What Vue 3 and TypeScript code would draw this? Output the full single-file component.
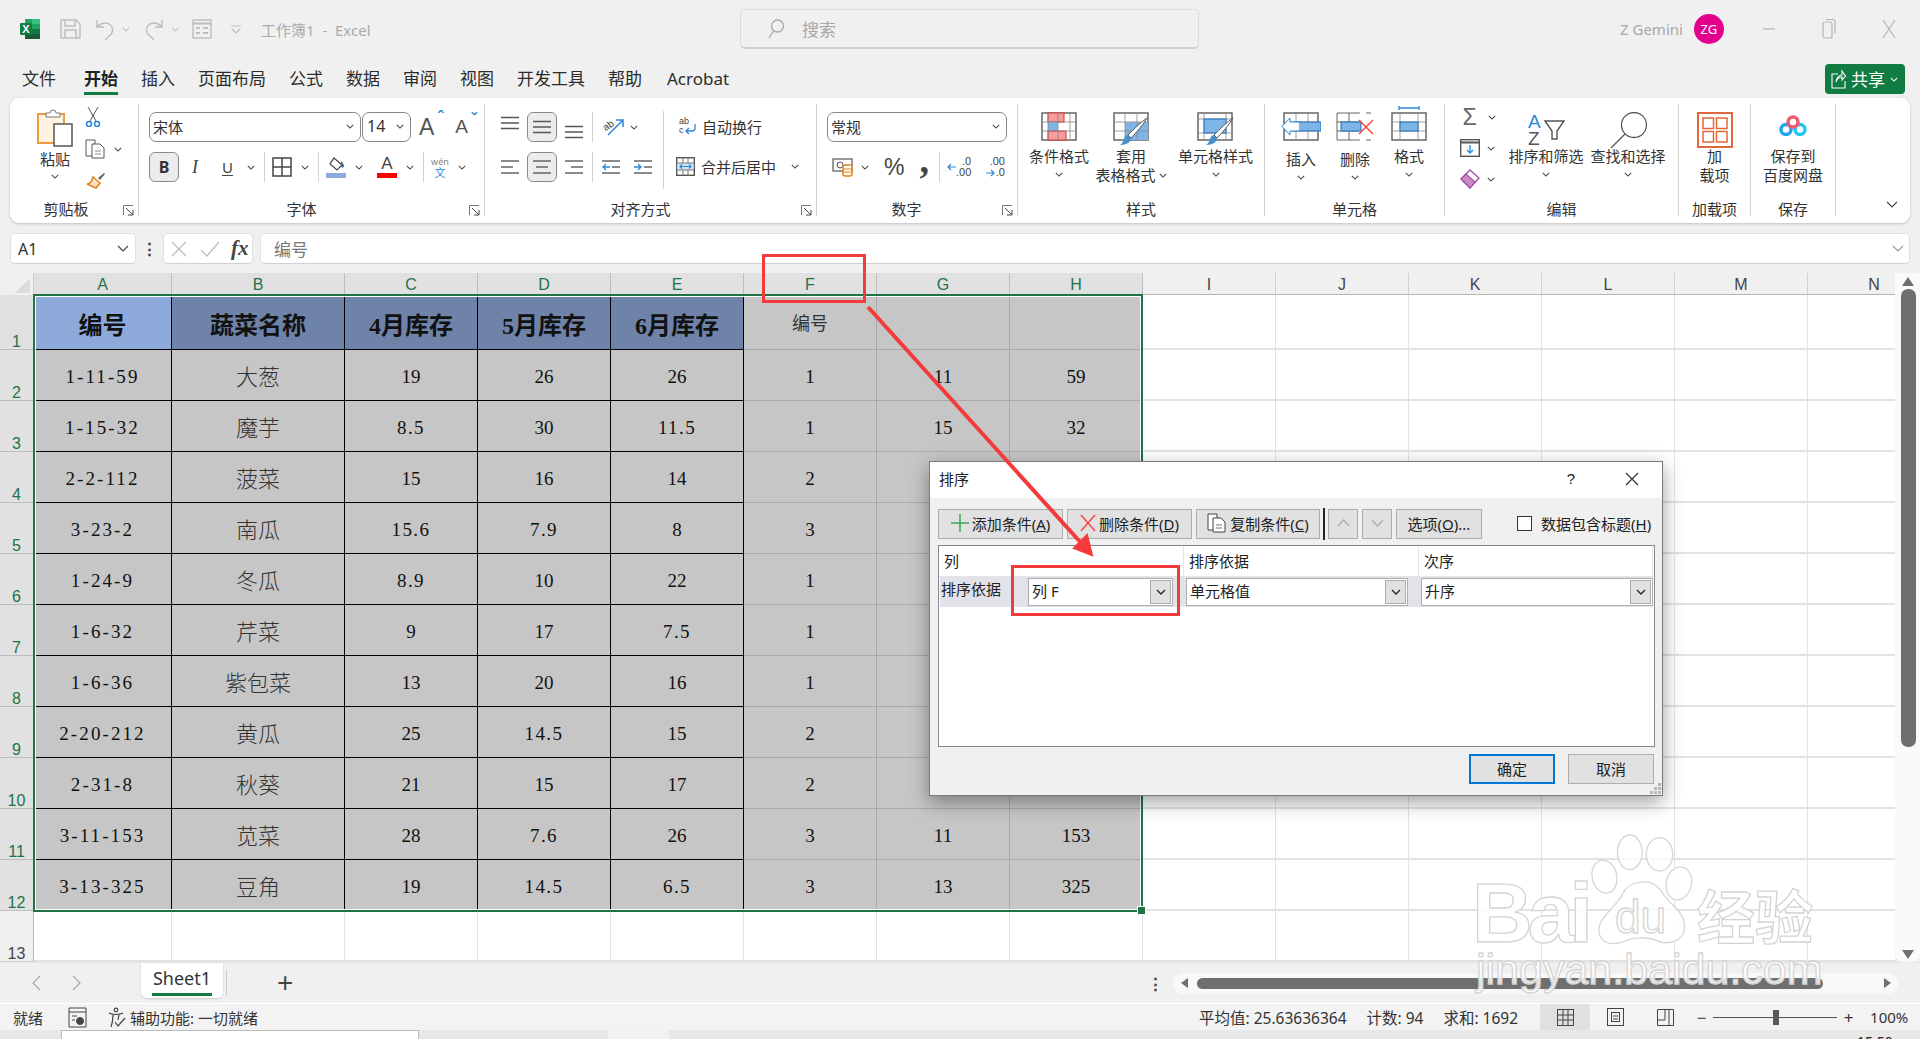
<template>
  <div class="app">
    <!-- shared icon symbols -->
    <svg class="defs" xmlns="http://www.w3.org/2000/svg">
      <symbol id="chev" viewBox="0 0 10 6"><path d="M1 1l4 4 4-4" fill="none" stroke="currentColor" stroke-width="1.3" /></symbol>
      <symbol id="launcher" viewBox="0 0 11 11">
        <path d="M.5 10V.5H10" fill="none" stroke="#777" />
        <path d="M3 3l6.5 6.5M5 10h5V5" fill="none" stroke="#444" />
      </symbol>
      <symbol id="lines" viewBox="0 0 18 14"><path d="M0 1.5h18M0 7h18M0 12.5h18" stroke="#555" stroke-width="1.3" /></symbol>
      <symbol id="brush" viewBox="0 0 30 30">
        <path d="M28 1C24 8 17 16 12 21l-3-3C15 12 22 5 28 1z" fill="#fff" stroke="#555" />
        <path d="M9 18l3 3c0 4-4 7-11 7 3-2 3-4 4-6 1-3 2-4 4-4z" fill="#4a90c8" />
      </symbol>
    </svg>

    <header class="titlebar">
      <svg class="logo" width="20" height="20" viewBox="0 0 20 20">
        <rect x="5" width="15" height="20" rx="1" fill="#21a366" />
        <rect x="12" width="8" height="5" fill="#33c481" />
        <rect x="12" y="10" width="8" height="5" fill="#107c41" />
        <rect x="5" y="15" width="15" height="5" fill="#185c37" />
        <rect y="4" width="12" height="12" rx="1" fill="#107c41" />
        <text x="6" y="14" font-size="11" font-weight="700" text-anchor="middle" fill="#fff" font-family="Liberation Sans">X</text>
      </svg>
      <svg class="qa-save" width="21" height="20" viewBox="0 0 21 20" fill="none" stroke="#bdbdbd" stroke-width="1.4">
        <path d="M1 1h15l4 4v14H1z" /><path d="M5 1v6h10V1M5 19v-8h11v8" />
      </svg>
      <svg class="qa-undo" width="20" height="21" viewBox="0 0 20 21" fill="none" stroke="#bdbdbd" stroke-width="1.4">
        <path d="M2 1v7h7M2 8c4-4 8-5 12-3 5 3 4 9 1 11l-5 5" />
      </svg>
      <svg class="qa-chev" width="8" height="5"><use href="#chev" /></svg>
      <svg class="qa-redo" width="20" height="21" viewBox="0 0 20 21" fill="none" stroke="#bdbdbd" stroke-width="1.4">
        <path d="M18 1v7h-7M18 8c-4-4-8-5-12-3-5 3-4 9-1 11l5 5" />
      </svg>
      <svg class="qa-chev" width="8" height="5"><use href="#chev" /></svg>
      <svg class="qa-form" width="20" height="20" viewBox="0 0 20 20" fill="none" stroke="#bdbdbd" stroke-width="1.4">
        <rect x="1" y="1" width="18" height="18" /><path d="M1 4.5h18" stroke-width="2" /><path d="M4 9h4M11 9h5M4 14h4M11 14h5" stroke-width="2" />
      </svg>
      <svg class="qa-custom" width="10" height="9" viewBox="0 0 10 9" fill="none" stroke="#bdbdbd" stroke-width="1.2"><path d="M0 1h10M1 4l4 4 4-4" /></svg>
      <span class="doc-title">工作簿1 &nbsp;-&nbsp; Excel</span>
      <div class="search">
        <svg width="16" height="20" viewBox="0 0 16 20" fill="none" stroke="#aaa" stroke-width="1.3"><circle cx="9.5" cy="7" r="6" /><path d="M5.500 12L1 19" /></svg>
        <span>搜索</span>
      </div>
      <span class="user-name">Z Gemini</span>
      <span class="avatar">ZG</span>
      <div class="win-btns">
        <svg width="14" height="14" viewBox="0 0 14 14"><path d="M1 7h12" stroke="#b5b5b5" stroke-width="1.200" /></svg>
        <svg width="14" height="22" viewBox="0 0 14 22" fill="none" stroke="#b5b5b5" stroke-width="1.200"><rect x="1" y="4" width="9" height="16" rx="2" /><path d="M4 1.500h7a2 2 0 0 1 2 2v12" /></svg>
        <svg width="14" height="22" viewBox="0 0 14 22" fill="none" stroke="#b5b5b5" stroke-width="1.200"><path d="M1 2l12 18M13 2L1 20" /></svg>
      </div>
    </header>

    <nav class="tabs">
      <span v-for="t in tabs" :key="t" class="tab" :class="{ active: t === '开始' }">{{ t }}</span>
      <button class="share">
        <svg width="15" height="20" viewBox="0 0 15 20" fill="none" stroke="#fff" stroke-width="1.100"><path d="M7 5H1v14h13v-7M5 13c0-4 3-7 6-7V2l3.500 5L11 11V8c-3 0-5 2-6 5z" /></svg>
        <span>共享</span>
        <svg class="chev" width="8" height="5"><use href="#chev" /></svg>
      </button>
    </nav>

    <section class="ribbon">
      <!-- 剪贴板 -->
      <div class="group" style="width: 129px">
        <div class="gbody clip-body">
          <div class="paste">
            <svg width="36" height="39" viewBox="0 0 36 39">
              <rect x="1" y="6" width="26" height="29" fill="#fff3e0" stroke="#ee9c3f" stroke-width="2" />
              <path d="M9 9V5h4a3 3 0 0 1 6 0h4v4z" fill="#fff" stroke="#777" />
              <rect x="17" y="16" width="18" height="22" fill="#fff" stroke="#555" stroke-width="1.500" />
            </svg>
            <span class="lbl">粘贴</span>
            <svg class="chev" width="8" height="5"><use href="#chev" /></svg>
          </div>
          <div class="clip-tools">
            <svg width="16" height="20" viewBox="0 0 16 20" fill="none">
              <path d="M3 0l8 14M13 0L5 14" stroke="#555" />
              <circle cx="4" cy="17" r="2.500" stroke="#2b88d8" stroke-width="1.500" /><circle cx="12" cy="17" r="2.500" stroke="#2b88d8" stroke-width="1.500" />
            </svg>
            <div class="copy-row">
              <svg width="20" height="20" viewBox="0 0 20 20" fill="#fff" stroke="#555">
                <path d="M1 1h9v16H1z" /><path d="M7 5h8l4 4v10H7z" /><path d="M10 12h6M10 15h6" stroke="#888" />
              </svg>
              <svg class="chev" width="8" height="5"><use href="#chev" /></svg>
            </div>
            <svg width="20" height="20" viewBox="0 0 20 20" fill="none">
              <path d="M19 2l-6 5 2 2 5-6z" fill="#666" />
              <path d="M8 6l7 6-4 5-9-4c3 0 5-3 6-7z" fill="#fbe3c5" stroke="#e8801a" stroke-width="1.500" />
            </svg>
          </div>
        </div>
        <div class="group-label" style="padding-right: 16px">剪贴板</div>
        <svg class="launch" width="11" height="11"><use href="#launcher" /></svg>
      </div>

      <!-- 字体 -->
      <div class="group" style="width: 346px">
        <div class="gbody font-body">
          <div class="tool-row">
            <div class="select" style="width: 212px"><span>宋体</span><svg class="chev" width="8" height="5"><use href="#chev" /></svg></div>
            <div class="select" style="width: 49px; margin-left: 1px"><span class="latin">14</span><svg class="chev" width="8" height="5"><use href="#chev" /></svg></div>
            <span class="grow-a big-a">A<i>ˆ</i></span>
            <span class="grow-a small-a">A<i>ˇ</i></span>
          </div>
          <div class="tool-row row2">
            <span class="toggled bold">B</span>
            <span class="italic">I</span>
            <span class="under">U</span>
            <svg class="chev" width="8" height="5"><use href="#chev" /></svg>
            <i class="vsep"></i>
            <svg width="20" height="20" viewBox="0 0 20 20" fill="none" stroke="#444" stroke-width="1.500"><rect x="1" y="1" width="18" height="18" /><path d="M10 1v18M1 10h18" /></svg>
            <svg class="chev" width="8" height="5"><use href="#chev" /></svg>
            <i class="vsep"></i>
            <div class="color-btn">
              <svg width="20" height="15" viewBox="0 0 20 15" fill="none"><path d="M8 1l8 7-5 5-7-6z" stroke="#444" stroke-width="1.200" /><path d="M15 4c2 2 3 4 3 5a1.500 1.500 0 0 1-3 0z" fill="#2b6cb0" /></svg>
              <i style="background: #8eaadb"></i>
            </div>
            <svg class="chev" width="8" height="5"><use href="#chev" /></svg>
            <div class="color-btn a-btn">
              <span>A</span>
              <i style="background: #f00"></i>
            </div>
            <svg class="chev" width="8" height="5"><use href="#chev" /></svg>
            <i class="vsep"></i>
            <div class="wen"><span>wén</span><b>文</b></div>
            <svg class="chev" width="8" height="5"><use href="#chev" /></svg>
          </div>
        </div>
        <div class="group-label" style="padding-right: 20px">字体</div>
        <svg class="launch" width="11" height="11"><use href="#launcher" /></svg>
      </div>

      <!-- 对齐方式 -->
      <div class="group" style="width: 332px">
        <div class="gbody align-body">
          <div class="align-left">
            <div class="tool-row">
              <svg class="al" width="18" height="14" style="margin-top: -9px"><use href="#lines" /></svg>
              <span class="toggled"><svg width="18" height="14"><use href="#lines" /></svg></span>
              <svg class="al" width="18" height="14" style="margin-top: 10px"><use href="#lines" /></svg>
              <i class="vsep"></i>
              <svg class="orient" width="22" height="20" viewBox="0 0 22 20" fill="none">
                <text x="1" y="12" font-size="10" fill="#444" font-family="Liberation Sans" transform="rotate(-35 6 9)">ab</text>
                <path d="M6 18L20 4M14 3h7v7" stroke="#2b88d8" stroke-width="1.500" />
              </svg>
              <svg class="chev" width="8" height="5"><use href="#chev" /></svg>
            </div>
            <div class="tool-row row2">
              <svg class="al" width="18" height="16" viewBox="0 0 18 16"><path d="M0 2h18M0 8h12M0 14h18" stroke="#666" stroke-width="1.500" /></svg>
              <span class="toggled"><svg width="18" height="16" viewBox="0 0 18 16"><path d="M0 2h18M3 8h12M0 14h18" stroke="#666" stroke-width="1.500" /></svg></span>
              <svg class="al" width="18" height="16" viewBox="0 0 18 16"><path d="M0 2h18M6 8h12M0 14h18" stroke="#666" stroke-width="1.500" /></svg>
              <i class="vsep"></i>
              <svg width="18" height="16" viewBox="0 0 18 16" fill="none"><path d="M0 2h18M10 8h8M0 14h18" stroke="#666" stroke-width="1.300" /><path d="M8 8H1M4 5L1 8l3 3" stroke="#2b88d8" stroke-width="1.300" /></svg>
              <svg width="18" height="16" viewBox="0 0 18 16" fill="none"><path d="M0 2h18M10 8h8M0 14h18" stroke="#666" stroke-width="1.300" /><path d="M0 8h7M4 5l3 3-3 3" stroke="#2b88d8" stroke-width="1.300" /></svg>
            </div>
          </div>
          <div class="merge-col">
            <div class="text-tool wrap-tool">
              <svg width="18" height="20" viewBox="0 0 18 20" fill="none">
                <text x="0" y="8" font-size="9" fill="#444" font-family="Liberation Sans">ab</text>
                <text x="0" y="17" font-size="9" fill="#444" font-family="Liberation Sans">c</text>
                <path d="M16 8v4c0 2-1 3-3 3H7M10 12l-3 3 3 3" stroke="#2b88d8" stroke-width="1.300" />
              </svg>
              <span>自动换行</span>
            </div>
            <div class="text-tool merge-tool">
              <svg width="19" height="19" viewBox="0 0 19 19" fill="none">
                <rect x=".7" y=".7" width="17.600" height="17.600" stroke="#555" stroke-width="1.400" />
                <rect x="1.400" y="6" width="16" height="7" fill="#cfe4f7" />
                <path d="M1 6h17M1 13h17M7 1v5M12 1v5M7 13v5M12 13v5" stroke="#777" />
                <path d="M4 9.500h11M6 7.500l-2 2 2 2M13 7.500l2 2-2 2" stroke="#2b88d8" stroke-width="1.200" />
              </svg>
              <span>合并后居中</span>
              <svg class="chev" width="8" height="5" style="margin-left: 9px"><use href="#chev" /></svg>
            </div>
          </div>
        </div>
        <div class="group-label" style="padding-right: 20px">对齐方式</div>
        <svg class="launch" width="11" height="11"><use href="#launcher" /></svg>
      </div>

      <!-- 数字 -->
      <div class="group" style="width: 201px">
        <div class="gbody num-body">
          <div class="select" style="width: 180px"><span>常规</span><svg class="chev" width="8" height="5"><use href="#chev" /></svg></div>
          <div class="tool-row row2 num-row">
            <svg width="21" height="20" viewBox="0 0 21 20" fill="none">
              <rect x="1" y="2" width="19" height="12" stroke="#555" stroke-width="1.200" />
              <circle cx="8" cy="8" r="3" stroke="#555" />
              <rect x="11" y="8" width="9" height="11" rx="2" fill="#fff" stroke="#e8801a" stroke-width="1.500" />
              <path d="M11 12h9M11 15h9" stroke="#e8801a" />
            </svg>
            <svg class="chev" width="8" height="5"><use href="#chev" /></svg>
            <span class="pct">%</span>
            <span class="comma">,</span>
            <i class="vsep"></i>
            <div class="dec"><svg width="9" height="8" viewBox="0 0 9 8" fill="none"><path d="M9 4H1M4 1L1 4l3 3" stroke="#2b88d8" stroke-width="1.200" /></svg><span>.0<br />.00</span></div>
            <div class="dec"><span>.00</span><span class="dec-b"><svg width="9" height="8" viewBox="0 0 9 8" fill="none"><path d="M0 4h8M5 1l3 3-3 3" stroke="#2b88d8" stroke-width="1.200" /></svg>.0</span></div>
          </div>
        </div>
        <div class="group-label" style="padding-right: 21px">数字</div>
        <svg class="launch" width="11" height="11"><use href="#launcher" /></svg>
      </div>

      <!-- 样式 -->
      <div class="group" style="width: 247px">
        <div class="gbody big-row" style="padding-left: 11px">
          <div class="big" style="width: 60px">
            <div class="big-icon">
              <svg width="36" height="29" viewBox="0 0 36 29">
                <rect x="1" y="1" width="34" height="27" fill="#fff" stroke="#666" stroke-width="1.500" />
                <rect x="7" y="1" width="16" height="9" fill="#f79c9c" stroke="#d33" />
                <rect x="7" y="10" width="10" height="9" fill="#7fb5e6" />
                <rect x="7" y="19" width="18" height="9" fill="#f79c9c" stroke="#d33" />
                <path d="M7 1v27M17 1v27M29 1v27M1 10h34M1 19h34" stroke="#888" fill="none" stroke-width=".8" />
              </svg>
            </div>
            <span class="lbl">条件格式</span>
            <svg class="chev" width="8" height="5"><use href="#chev" /></svg>
          </div>
          <div class="big" style="width: 68px; margin-left: 8px">
            <div class="big-icon styled-icon">
              <svg width="36" height="36" viewBox="0 0 36 36">
                <rect x="1" y="1" width="34" height="27" fill="#fff" stroke="#666" stroke-width="1.500" />
                <rect x="12" y="10" width="23" height="18" fill="#7fb5e6" />
                <path d="M12 1v27M24 1v27M1 10h34M1 19h34" stroke="#888" fill="none" stroke-width=".8" />
                <svg x="6" y="5" width="30" height="30"><use href="#brush" /></svg>
              </svg>
            </div>
            <span class="lbl">套用</span>
            <span class="lbl table-fmt">表格格式<svg class="chev" width="8" height="5"><use href="#chev" /></svg></span>
          </div>
          <div class="big" style="width: 75px; margin-left: 13px">
            <div class="big-icon styled-icon">
              <svg width="38" height="36" viewBox="0 0 38 36">
                <rect x="1" y="1" width="34" height="27" fill="#fff" stroke="#666" stroke-width="1.500" />
                <path d="M7 1v27M29 1v27M1 7h34M1 21h34" stroke="#888" fill="none" stroke-width=".8" />
                <rect x="7" y="7" width="22" height="14" fill="#7fb5e6" stroke="#1f6fb5" />
                <svg x="8" y="5" width="30" height="30"><use href="#brush" /></svg>
              </svg>
            </div>
            <span class="lbl">单元格样式</span>
            <svg class="chev" width="8" height="5"><use href="#chev" /></svg>
          </div>
        </div>
        <div class="group-label">样式</div>
      </div>

      <!-- 单元格 -->
      <div class="group" style="width: 180px">
        <div class="gbody big-row" style="padding-left: 16px">
          <div class="big" style="width: 40px">
            <div class="big-icon">
              <svg width="40" height="29" viewBox="0 0 40 29">
                <rect x="3" y="1" width="34" height="27" fill="#fff" stroke="#666" stroke-width="1.500" />
                <path d="M15 1v27M27 1v27M3 10h34M3 19h34" stroke="#888" fill="none" stroke-width=".8" />
                <rect x="14" y="10" width="26" height="9" fill="#7fb5e6" stroke="#1f6fb5" />
                <path d="M18 11v-1h-9V6L1 14.500 9 23v-4h9" fill="#fff" stroke="#2b88d8" />
              </svg>
            </div>
            <span class="lbl low">插入</span>
            <svg class="chev low" width="8" height="5"><use href="#chev" /></svg>
          </div>
          <div class="big" style="width: 38px; margin-left: 15px">
            <div class="big-icon">
              <svg width="38" height="29" viewBox="0 0 38 29">
                <path d="M24 1H1v27h23M13 1v27M1 10h22M1 19h22" stroke="#666" fill="none" />
                <path d="M30 1h5M30 28h5" stroke="#666" />
                <rect x="5" y="10" width="20" height="9" fill="#7fb5e6" stroke="#1f6fb5" />
                <path d="M23 8l14 14M37 8L23 22" stroke="#f44" stroke-width="1.500" />
              </svg>
            </div>
            <span class="lbl low">删除</span>
            <svg class="chev low" width="8" height="5"><use href="#chev" /></svg>
          </div>
          <div class="big fmt-big" style="width: 36px; margin-left: 17px">
            <div class="big-icon">
              <svg width="36" height="35" viewBox="0 0 36 35">
                <path d="M8 2h20M8 0v4M28 0v4" stroke="#2b88d8" stroke-width="1.300" />
                <rect x="1" y="7" width="34" height="27" fill="#fff" stroke="#666" stroke-width="1.500" />
                <path d="M9 7v27M27 7v27M1 16h34M1 25h34" stroke="#888" fill="none" stroke-width=".8" />
                <rect x="9" y="16" width="18" height="9" fill="#7fb5e6" stroke="#1f6fb5" />
              </svg>
            </div>
            <span class="lbl">格式</span>
            <svg class="chev" width="8" height="5"><use href="#chev" /></svg>
          </div>
        </div>
        <div class="group-label">单元格</div>
      </div>

      <!-- 编辑 -->
      <div class="group" style="width: 234px">
        <div class="gbody big-row edit-body">
          <div class="edit-tools">
            <div class="edit-line">
              <span class="sigma">Σ</span>
              <svg class="chev" width="8" height="5" style="margin-left: 9px"><use href="#chev" /></svg>
            </div>
            <div class="edit-line">
              <svg width="20" height="18" viewBox="0 0 20 18" fill="none">
                <rect x=".7" y=".7" width="18.600" height="16.600" stroke="#555" stroke-width="1.400" /><path d="M1 3.500h18" stroke="#555" stroke-width="2" />
                <path d="M10 6v8M7 11l3 3 3-3" stroke="#2b88d8" stroke-width="1.300" />
              </svg>
              <svg class="chev" width="8" height="5" style="margin-left: 7px"><use href="#chev" /></svg>
            </div>
            <div class="edit-line">
              <svg width="20" height="20" viewBox="0 0 20 20" fill="none">
                <path d="M10 1l9 8-9 10-9-9z" fill="#fff" stroke="#a349a4" stroke-width="1.300" />
                <path d="M1 10l5-5 9 8-5 6z" fill="#c78ac8" stroke="#a349a4" stroke-width="1.100" />
              </svg>
              <svg class="chev" width="8" height="5" style="margin-left: 7px"><use href="#chev" /></svg>
            </div>
          </div>
          <div class="big" style="width: 76px; margin-left: 12px">
            <div class="big-icon">
              <svg width="37" height="35" viewBox="0 0 37 35" fill="none">
                <text x="0" y="16" font-size="19" fill="#2b88d8" font-family="Liberation Sans">A</text>
                <text x="0" y="33" font-size="19" fill="#555" font-family="Liberation Sans">Z</text>
                <path d="M17 9h19l-7 10v8h-5v-8z" stroke="#555" stroke-width="1.400" />
              </svg>
            </div>
            <span class="lbl">排序和筛选</span>
            <svg class="chev" width="8" height="5"><use href="#chev" /></svg>
          </div>
          <div class="big" style="width: 76px; margin-left: 6px">
            <div class="big-icon">
              <svg width="37" height="37" viewBox="0 0 37 37" fill="none" stroke="#555" stroke-width="1.300"><circle cx="24" cy="13" r="12.500" /><path d="M15 22L1 36" /></svg>
            </div>
            <span class="lbl">查找和选择</span>
            <svg class="chev" width="8" height="5"><use href="#chev" /></svg>
          </div>
        </div>
        <div class="group-label">编辑</div>
      </div>

      <!-- 加载项 -->
      <div class="group" style="width: 72px">
        <div class="gbody big-row" style="justify-content: center">
          <div class="big">
            <div class="big-icon">
              <svg width="36" height="36" viewBox="0 0 36 36" fill="none" stroke="#e0683a" stroke-width="1.500">
                <rect x="1" y="1" width="34" height="34" stroke-width="2" />
                <rect x="6" y="6" width="10.500" height="10.500" /><rect x="19.500" y="6" width="10.500" height="10.500" />
                <rect x="6" y="19.500" width="10.500" height="10.500" /><rect x="19.500" y="19.500" width="10.500" height="10.500" />
              </svg>
            </div>
            <span class="lbl">加</span>
            <span class="lbl table-fmt">载项</span>
          </div>
        </div>
        <div class="group-label">加载项</div>
      </div>

      <!-- 保存 -->
      <div class="group" style="width: 85px">
        <div class="gbody big-row" style="justify-content: center">
          <div class="big">
            <div class="big-icon baidu-icon">
              <svg width="28" height="22" viewBox="0 0 28 22" fill="none" stroke-width="3.500">
                <circle cx="7" cy="14.500" r="5" stroke="#22a5ee" />
                <circle cx="21" cy="14.500" r="5" stroke="#22c5ee" />
                <circle cx="14" cy="7" r="5" stroke="#ef5a6f" />
              </svg>
            </div>
            <span class="lbl">保存到</span>
            <span class="lbl table-fmt">百度网盘</span>
          </div>
        </div>
        <div class="group-label">保存</div>
      </div>

      <div class="collapse">
        <svg width="12" height="7" viewBox="0 0 12 7"><path d="M1 1l5 5 5-5" fill="none" stroke="#444" stroke-width="1.200" /></svg>
      </div>
    </section>

    <section class="formula">
      <div class="name-box"><span>A1</span><svg width="12" height="7" viewBox="0 0 12 7"><path d="M1 1l5 5 5-5" fill="none" stroke="#444" stroke-width="1.200" /></svg></div>
      <span class="dots">⋮</span>
      <div class="fx-box">
        <svg width="16" height="16" viewBox="0 0 16 16"><path d="M1 1l14 14M15 1L1 15" stroke="#bbb" stroke-width="1.200" /></svg>
        <svg width="20" height="16" viewBox="0 0 20 16"><path d="M1 9l6 6L19 1" fill="none" stroke="#bbb" stroke-width="1.200" /></svg>
        <span class="fx">fx</span>
      </div>
      <div class="formula-input">
        <span>编号</span>
        <svg width="12" height="7" viewBox="0 0 12 7"><path d="M1 1l5 5 5-5" fill="none" stroke="#999" stroke-width="1.200" /></svg>
      </div>
    </section>

    <section class="sheet-wrap">
      <div class="sheet">
        <div class="corner"><i></i></div>
        <div v-for="(c, i) in cols" :key="c" class="col-head" :class="{ sel: i < 8 }">{{ c }}</div>
        <template v-for="row in sheetRows" :key="row.n">
          <div class="row-head" :class="{ sel: row.n <= 12 }">{{ row.n }}</div>
          <div v-for="(cell, i) in row.cells" :key="i" class="cell" :class="cell.cls">{{ cell.text }}</div>
        </template>
        <div class="sel-box"><i></i></div>
      </div>
      <div class="vscroll">
        <i class="tri up"></i>
        <div class="vthumb"></div>
        <i class="tri down"></i>
      </div>
    </section>

    <section class="sheet-tabs">
      <svg class="nav-a" width="9" height="16" viewBox="0 0 9 16"><path d="M8 1L1 8l7 7" fill="none" stroke="#aaa" stroke-width="1.200" /></svg>
      <svg class="nav-b" width="9" height="16" viewBox="0 0 9 16"><path d="M1 1l7 7-7 7" fill="none" stroke="#aaa" stroke-width="1.200" /></svg>
      <div class="sheet-tab"><span>Sheet1</span></div>
      <i class="tab-sep"></i>
      <span class="add-sheet">+</span>
      <span class="h-dots">⋮</span>
      <div class="hscroll">
        <i class="tri left"></i>
        <div class="hthumb"></div>
        <i class="tri right"></i>
      </div>
    </section>

    <footer class="status">
      <span class="st-ready">就绪</span>
      <svg class="st-macro" width="19" height="21" viewBox="0 0 19 21" fill="none" stroke="#444">
        <path d="M1 1h17v19H1zM1 5h17M4 9h5M4 13h3" /><circle cx="12" cy="14" r="3.500" fill="#444" />
      </svg>
      <svg class="st-access" width="18" height="21" viewBox="0 0 18 21" fill="none" stroke="#444" stroke-width="1.200">
        <circle cx="8" cy="3" r="1.800" /><path d="M1 6c3 2 10 2 14 0M5 8c0 4 0 6-2 12M11 8l-1 5M7 15l3 4 7-8" />
      </svg>
      <span class="st-access-text">辅助功能: 一切就绪</span>
      <span class="st-stat" style="margin-left: 941px">平均值: 25.63636364</span>
      <span class="st-stat" style="margin-left: 20px">计数: 94</span>
      <span class="st-stat" style="margin-left: 20px">求和: 1692</span>
      <div class="view-btn on">
        <svg width="17" height="17" viewBox="0 0 17 17" fill="none" stroke="#444"><rect x=".5" y=".5" width="16" height="16" /><path d="M6 1v15M11 1v15M1 6h15M1 11h15" /></svg>
      </div>
      <div class="view-btn">
        <svg width="17" height="18" viewBox="0 0 17 18" fill="none" stroke="#444"><rect x=".5" y=".5" width="16" height="17" /><rect x="4.500" y="4.500" width="8" height="9" /><path d="M6 8h5M6 11h5" /></svg>
      </div>
      <div class="view-btn">
        <svg width="17" height="17" viewBox="0 0 17 17" fill="none" stroke="#444"><path d="M.5.500v16h16V.5zM8 1v10H1M12 1v15" /></svg>
      </div>
      <span class="zoom-sign">−</span>
      <div class="zoom-track"><i></i></div>
      <span class="zoom-sign">+</span>
      <span class="zoom-pct">100%</span>
    </footer>

    <div class="taskbar">
      <div class="task-win"></div>
      <div class="task-light"></div>
      <span class="clock">15:50</span>
    </div>

    <!-- 排序对话框 -->
    <div class="dialog">
      <div class="dlg-title">
        <span>排序</span>
        <span class="dlg-help">?</span>
        <svg width="14" height="14" viewBox="0 0 14 14"><path d="M1 1l12 12M13 1L1 13" stroke="#333" stroke-width="1.200" /></svg>
      </div>
      <div class="dlg-body">
        <div class="dlg-toolbar">
          <button class="btn" style="width: 125px">
            <svg width="18" height="18" viewBox="0 0 18 18"><path d="M9 0v18M0 9h18" stroke="#3aa655" stroke-width="1.500" /></svg>
            <span>添加条件(<u>A</u>)</span>
          </button>
          <button class="btn" style="width: 125px">
            <svg width="16" height="18" viewBox="0 0 16 18"><path d="M1 1l14 16M15 1L1 17" stroke="#f44" stroke-width="1.500" /></svg>
            <span>删除条件(<u>D</u>)</span>
          </button>
          <button class="btn" style="width: 124px">
            <svg width="20" height="20" viewBox="0 0 20 20" fill="#fff" stroke="#444"><path d="M1 1h9v16H1z" /><path d="M6 5h8l4 4v10H6z" /><path d="M9 12h6M9 15h6" stroke="#777" /></svg>
            <span>复制条件(<u>C</u>)</span>
          </button>
          <i class="dlg-sep"></i>
          <button class="btn arrow-btn"><svg width="13" height="8" viewBox="0 0 13 8"><path d="M1 7l5.500-6L12 7" fill="none" stroke="#aaa" stroke-width="1.200" /></svg></button>
          <button class="btn arrow-btn"><svg width="13" height="8" viewBox="0 0 13 8"><path d="M1 1l5.500 6L12 1" fill="none" stroke="#aaa" stroke-width="1.200" /></svg></button>
          <button class="btn" style="width: 86px"><span>选项(<u>O</u>)...</span></button>
          <label class="has-header"><i></i><span>数据包含标题(<u>H</u>)</span></label>
        </div>
        <div class="dlg-list">
          <div class="list-head">
            <span style="width: 245px">列</span>
            <span style="width: 235px">排序依据</span>
            <span style="width: 234px">次序</span>
          </div>
          <div class="list-row">
            <span class="row-name">排序依据</span>
            <div class="combo" style="width: 145px"><span>列 F</span><b><svg width="10" height="6"><use href="#chev" /></svg></b></div>
            <div class="combo" style="width: 222px; margin-left: 13px"><span>单元格值</span><b><svg width="10" height="6"><use href="#chev" /></svg></b></div>
            <div class="combo" style="width: 232px; margin-left: 13px"><span>升序</span><b><svg width="10" height="6"><use href="#chev" /></svg></b></div>
          </div>
        </div>
        <div class="dlg-foot">
          <button class="btn foot-btn primary">确定</button>
          <button class="btn foot-btn">取消</button>
        </div>
      </div>
      <div class="grip"><i v-for="n in 6" :key="n"></i></div>
    </div>

    <!-- 标注 -->
    <div class="mark mark-f"></div>
    <div class="mark mark-combo"></div>
    <svg class="arrow" width="1920" height="1039" viewBox="0 0 1920 1039">
      <path d="M868 307L1082 544" stroke="#f33b3b" stroke-width="4" fill="none" />
      <path d="M1092 555L1074 548 1087 535z" fill="#f33b3b" stroke="#f33b3b" stroke-width="2" />
    </svg>

    <!-- 水印 -->
    <div class="watermark">
      <span class="wm-bai">Bai</span>
      <svg class="wm-paw" width="107" height="120" viewBox="380 30 320 360" fill="rgba(255,255,255,.8)" stroke="#d6d6d6" stroke-width="4">
        <ellipse cx="432" cy="170" rx="37" ry="50" transform="rotate(-12 432 170)" />
        <ellipse cx="508" cy="97" rx="37" ry="52" />
        <ellipse cx="597" cy="103" rx="40" ry="50" />
        <ellipse cx="655" cy="190" rx="38" ry="50" transform="rotate(12 655 190)" />
        <path d="M415 330C415 290 470 260 490 215 505 185 570 170 600 210 620 250 672 270 672 320 672 370 610 375 590 362 560 350 520 350 490 365 450 380 415 365 415 330Z" />
      </svg>
      <span class="wm-du">du</span>
      <span class="wm-jy">经验</span>
      <span class="wm-url">jingyan.baidu.com</span>
    </div>
  </div>
</template>

<script setup lang="ts">
import { computed } from 'vue'

interface Veg {
  id: string
  name: string
  apr: string
  may: string
  jun: string
}

interface Cell {
  text: string
  cls: string
}

const tabs = ['文件', '开始', '插入', '页面布局', '公式', '数据', '审阅', '视图', '开发工具', '帮助', 'Acrobat']
const cols = ['A', 'B', 'C', 'D', 'E', 'F', 'G', 'H', 'I', 'J', 'K', 'L', 'M', 'N']

const data: Veg[] = [
  { id: '1-11-59', name: '大葱', apr: '19', may: '26', jun: '26' },
  { id: '1-15-32', name: '魔芋', apr: '8.5', may: '30', jun: '11.5' },
  { id: '2-2-112', name: '菠菜', apr: '15', may: '16', jun: '14' },
  { id: '3-23-2', name: '南瓜', apr: '15.6', may: '7.9', jun: '8' },
  { id: '1-24-9', name: '冬瓜', apr: '8.9', may: '10', jun: '22' },
  { id: '1-6-32', name: '芹菜', apr: '9', may: '17', jun: '7.5' },
  { id: '1-6-36', name: '紫包菜', apr: '13', may: '20', jun: '16' },
  { id: '2-20-212', name: '黄瓜', apr: '25', may: '14.5', jun: '15' },
  { id: '2-31-8', name: '秋葵', apr: '21', may: '15', jun: '17' },
  { id: '3-11-153', name: '苋菜', apr: '28', may: '7.6', jun: '26' },
  { id: '3-13-325', name: '豆角', apr: '19', may: '14.5', jun: '6.5' }
]

const num = (text: string, cls: string): Cell => ({
  text,
  cls: `${cls} num${text.includes('-') ? ' wider' : text.includes('.') ? ' wide' : ''}`
})

// 空白列 I 到 N
const blanks = (): Cell[] => Array.from({ length: 6 }, () => ({ text: '', cls: 'blank' }))

const sheetRows = computed(() => {
  const head: Cell[] = [
    { text: '编号', cls: 'active head' },
    { text: '蔬菜名称', cls: 'dim head' },
    { text: '4月库存', cls: 'dim head' },
    { text: '5月库存', cls: 'dim head' },
    { text: '6月库存', cls: 'dim head' },
    { text: '编号', cls: 'split small' },
    { text: '', cls: 'split' },
    { text: '', cls: 'split' },
    ...blanks()
  ]
  const rows = data.map((v, i) => {
    const [a, b, c] = v.id.split('-')
    // 第 4 到 10 行的 G、H 列被对话框挡住
    const covered = i >= 2 && i <= 8
    return {
      n: i + 2,
      cells: [
        num(v.id, 'data'),
        { text: v.name, cls: 'data cjk' },
        num(v.apr, 'data'),
        num(v.may, 'data'),
        num(v.jun, 'data'),
        num(a, 'split'),
        num(covered ? '' : b, 'split'),
        num(covered ? '' : c, 'split'),
        ...blanks()
      ]
    }
  })
  const empty: Cell[] = cols.map(() => ({ text: '', cls: 'blank' }))
  return [{ n: 1, cells: head }, ...rows, { n: 13, cells: empty }]
})
</script>

<style>
html,
body {
  margin: 0;
  background: #f0f0f0;
  overflow: hidden;
}
</style>

<style scoped>
.app {
  position: relative;
  display: flex;
  flex-direction: column;
  width: 1920px;
  height: 1039px;
  overflow: hidden;
  background: #f0f0f0;
  color: #333;
  font-family: "Noto Sans", "Noto Sans CJK SC", sans-serif;
  font-size: 15px;
}

.defs {
  position: absolute;
  width: 0;
  height: 0;
}

i {
  font-style: normal;
}

.chev {
  display: block;
  flex: none;
  color: #444;
}

/* 标题栏 */
.titlebar {
  display: flex;
  align-items: center;
  height: 58px;
  padding-left: 20px;
  flex: none;
  color: #b0b0b0;
}

.titlebar .qa-chev {
  color: #bdbdbd;
  margin-left: 7px;
}

.qa-save {
  margin-left: 20px;
}

.qa-undo {
  margin-left: 14px;
}

.qa-redo {
  margin-left: 14px;
}

.qa-form {
  margin-left: 13px;
}

.qa-custom {
  margin-left: 19px;
}

.doc-title {
  margin-left: 20px;
  width: 479px;
  font-size: 15px;
  white-space: nowrap;
  color: #ababab;
}

.search {
  display: flex;
  align-items: center;
  gap: 18px;
  box-sizing: border-box;
  width: 459px;
  height: 40px;
  padding-left: 27px;
  background: #f0f0f0;
  border: 1px solid #dcdcdc;
  border-bottom: 2px solid #cfcfcf;
  border-radius: 5px;
  color: #a8a8a8;
  font-size: 17px;
}

.user-name {
  margin-left: 421px;
  font-size: 15px;
  color: #a8a8a8;
  white-space: nowrap;
}

.avatar {
  display: flex;
  align-items: center;
  justify-content: center;
  width: 30px;
  height: 30px;
  margin-left: 11px;
  border-radius: 50%;
  background: #e3008c;
  color: #fff;
  font-size: 13px;
}

.win-btns {
  display: flex;
  align-items: center;
  gap: 46px;
  margin-left: 38px;
}

/* 选项卡 */
.tabs {
  display: flex;
  align-items: flex-start;
  gap: 23px;
  height: 40px;
  padding: 9px 15px 0 22px;
  box-sizing: border-box;
  flex: none;
  font-size: 17px;
  line-height: 23px;
  color: #2b2b2b;
}

.tab {
  position: relative;
  white-space: nowrap;
}

.tab:first-child {
  margin-right: 5px;
}

.tab:last-of-type {
  margin-left: 2px;
}

.tab.active {
  font-weight: 700;
  color: #222;
}

.tab.active::after {
  content: "";
  display: block;
  height: 3px;
  margin-top: 2px;
  background: #107c41;
}

.share {
  display: flex;
  align-items: center;
  gap: 5px;
  box-sizing: border-box;
  width: 80px;
  height: 30px;
  margin: -3px 0 0 auto;
  padding: 0 0 0 6px;
  border: 0;
  border-radius: 4px;
  background: #107c41;
  color: #fff;
  font: inherit;
  font-size: 17px;
}

.share .chev {
  color: #fff;
}

/* 功能区 */
.ribbon {
  display: flex;
  box-sizing: border-box;
  height: 125px;
  margin: 0 10px;
  padding-top: 6px;
  flex: none;
  background: #fff;
  border-radius: 9px;
  box-shadow: 0 1px 3px rgba(0, 0, 0, 0.2);
}

.group {
  position: relative;
  display: flex;
  flex-direction: column;
  box-sizing: border-box;
  height: 112px;
  flex: none;
  border-right: 1px solid #d3d3d3;
}

.gbody {
  box-sizing: border-box;
  height: 95px;
  flex: none;
}

.group-label {
  font-size: 15px;
  line-height: 20px;
  text-align: center;
  color: #333;
}

.launch {
  position: absolute;
  right: 4px;
  bottom: 0;
}

.lbl {
  display: block;
  font-size: 15px;
  line-height: 19px;
  white-space: nowrap;
  color: #333;
}

.clip-body {
  display: flex;
  padding: 4px 0 0 27px;
}

.paste {
  display: flex;
  flex-direction: column;
  align-items: center;
  width: 36px;
}

.paste .lbl {
  margin-top: 3px;
}

.paste .chev {
  margin-top: 5px;
}

.clip-tools {
  display: flex;
  flex-direction: column;
  gap: 12px;
  margin-left: 12px;
  margin-top: -1px;
}

.copy-row {
  display: flex;
  align-items: center;
  gap: 9px;
}

.tool-row {
  display: flex;
  align-items: center;
  height: 30px;
}

.tool-row.row2 {
  margin-top: 10px;
}

.font-body {
  padding: 8px 0 0 10px;
}

.select {
  display: flex;
  align-items: center;
  justify-content: space-between;
  box-sizing: border-box;
  height: 30px;
  padding: 0 6px 2px 3px;
  flex: none;
  border: 1px solid #8a8a8a;
  border-radius: 7px;
  font-size: 15px;
}

.select .latin {
  font-size: 16px;
  margin-left: 1px;
}

.grow-a {
  position: relative;
  font-family: "Liberation Sans", sans-serif;
  color: #555;
}

.grow-a i {
  position: absolute;
  right: -9px;
  top: -6px;
  color: #2b88d8;
  font-size: 17px;
  font-weight: 700;
}

.big-a {
  margin-left: 8px;
  font-size: 23px;
}

.small-a {
  margin-left: 21px;
  font-size: 19px;
}

.toggled {
  display: flex;
  align-items: center;
  justify-content: center;
  box-sizing: border-box;
  width: 30px;
  height: 30px;
  flex: none;
  background: #ececec;
  border: 1px solid #8a8a8a;
  border-radius: 6px;
}

.bold {
  font-family: "Noto Sans", sans-serif;
  font-weight: 700;
  font-size: 16px;
}

.italic {
  margin-left: 13px;
  font-family: "Liberation Serif", serif;
  font-style: italic;
  font-size: 18px;
  color: #444;
}

.under {
  margin-left: 24px;
  font-size: 15px;
  text-decoration: underline;
  text-underline-offset: 2px;
  color: #444;
}

.font-body .row2 .chev {
  margin-left: 9px;
}

.font-body .row2 .under + .chev {
  margin-left: 14px;
}

.vsep {
  display: block;
  width: 1px;
  height: 30px;
  flex: none;
  background: #d3d3d3;
}

.font-body .row2 .vsep {
  margin: 0 7px 0 9px;
}

.color-btn {
  display: flex;
  flex-direction: column;
  align-items: center;
  gap: 1px;
  width: 20px;
}

.color-btn i {
  display: block;
  width: 20px;
  height: 5px;
  flex: none;
}

.a-btn {
  margin-left: 14px;
}

.a-btn span {
  font-family: "Liberation Sans", sans-serif;
  font-size: 17px;
  line-height: 16px;
  color: #444;
}

.wen {
  display: flex;
  flex-direction: column;
  align-items: center;
  width: 18px;
  font-size: 9px;
  line-height: 11px;
  color: #888;
}

.wen b {
  font-weight: 400;
  font-size: 11px;
  color: #2b88d8;
}

.align-body {
  display: flex;
  padding: 8px 0 0 16px;
}

.align-left {
  width: 162px;
}

.align-left .toggled {
  margin: 0 8px;
}

.align-left .tool-row .vsep {
  margin: 0 9px;
}

.align-left .chev {
  margin-left: 6px;
}

.align-left .row2 > svg:last-child {
  margin-left: 14px;
}

.merge-col {
  display: flex;
  flex-direction: column;
  box-sizing: border-box;
  height: 78px;
  margin-top: -1px;
  padding-left: 12px;
  border-left: 1px solid #d3d3d3;
}

.text-tool {
  display: flex;
  align-items: center;
  font-size: 15px;
  white-space: nowrap;
}

.wrap-tool {
  height: 30px;
  margin: 0 0 0 3px;
  gap: 5px;
}

.merge-tool {
  height: 30px;
  margin-top: 10px;
  gap: 6px;
}

.num-body {
  padding: 8px 0 0 10px;
}

.num-row {
  padding-left: 5px;
}

.num-row .chev {
  margin-left: 8px;
}

.pct {
  margin-left: 15px;
  font-family: "Liberation Sans", sans-serif;
  font-size: 23px;
  color: #444;
}

.comma {
  margin: -14px 0 0 15px;
  font-family: "Liberation Serif", serif;
  font-weight: 700;
  font-size: 38px;
  line-height: 30px;
  color: #444;
}

.num-row .vsep {
  margin-left: 10px;
}

.dec {
  display: flex;
  align-items: center;
  width: 26px;
  margin-left: 7px;
  font-family: "Liberation Sans", sans-serif;
  font-size: 11px;
  line-height: 11px;
  text-align: right;
  color: #444;
}

.dec + .dec {
  margin-left: 6px;
  flex-direction: column;
  align-items: flex-end;
}

.dec-b {
  display: flex;
  align-items: center;
  gap: 1px;
}

.big-row {
  display: flex;
}

.big {
  display: flex;
  flex-direction: column;
  align-items: center;
  flex: none;
}

.big-icon {
  display: flex;
  align-items: flex-start;
  justify-content: center;
  box-sizing: border-box;
  height: 43px;
  padding-top: 8px;
  flex: none;
}

.big > .chev {
  margin-top: 6px;
}

.fmt-big .big-icon {
  padding-top: 2px;
}

.baidu-icon {
  padding-top: 11px;
}

.lbl.low {
  margin-top: 3px;
}

.big > .chev.low {
  margin-top: 6px;
}

.table-fmt {
  display: flex;
  align-items: center;
  gap: 3px;
}

.edit-body {
  padding-left: 15px;
}

.edit-tools {
  display: flex;
  flex-direction: column;
  gap: 11px;
  padding-top: 3px;
  width: 36px;
}

.edit-line {
  display: flex;
  align-items: center;
  height: 20px;
}

.sigma {
  display: block;
  width: 20px;
  font-family: "Liberation Sans", sans-serif;
  font-size: 23px;
  line-height: 20px;
  color: #666;
  text-align: center;
}

.collapse {
  display: flex;
  align-items: flex-end;
  justify-content: flex-end;
  box-sizing: border-box;
  height: 104px;
  flex: 1;
  padding-right: 12px;
}

/* 编辑栏 */
.formula {
  display: flex;
  align-items: center;
  height: 31px;
  margin: 10px 10px 9px;
  flex: none;
}

.name-box,
.fx-box,
.formula-input {
  display: flex;
  align-items: center;
  box-sizing: border-box;
  height: 31px;
  background: #fff;
  border: 1px solid #e0e0e0;
  border-bottom-color: #d0d0d0;
  border-radius: 5px;
}

.name-box {
  justify-content: space-between;
  width: 126px;
  padding: 0 6px 0 7px;
  font-size: 16px;
  color: #333;
}

.dots {
  width: 27px;
  text-align: center;
  font-weight: 700;
  font-size: 17px;
  color: #444;
}

.fx-box {
  width: 90px;
  padding-left: 7px;
  gap: 13px;
}

.fx {
  margin-left: -2px;
  font-family: "Liberation Serif", serif;
  font-style: italic;
  font-weight: 700;
  font-size: 21px;
  color: #444;
}

.formula-input {
  flex: 1;
  justify-content: space-between;
  margin-left: 7px;
  padding: 0 5px 0 13px;
  font-size: 17px;
  color: #777;
}

/* 工作表 */
.sheet-wrap {
  display: flex;
  height: 689px;
  flex: none;
}

.sheet {
  position: relative;
  display: grid;
  grid-template-columns: 34px 138px 173px repeat(12, 133px);
  grid-template-rows: 22px 55px repeat(12, 51px);
  width: 1895px;
  flex: none;
  overflow: hidden;
  background: #fff;
}

.corner {
  position: relative;
  background: #f0f0f0;
  border-right: 1px solid #ccc;
  box-sizing: border-box;
}

.corner i {
  position: absolute;
  right: 3px;
  bottom: 2px;
  border-left: 15px solid transparent;
  border-bottom: 15px solid #dcdcdc;
}

.col-head {
  box-sizing: border-box;
  font-family: "Liberation Sans", sans-serif;
  font-size: 16px;
  line-height: 24px;
  text-align: center;
  background: #f0f0f0;
  border-right: 1px solid #d0d0d0;
  border-bottom: 1px solid #b5b5b5;
  color: #444;
}

.col-head.sel {
  background: #e1e1e1;
  border-right-color: #bdbdbd;
  color: #217346;
}

.row-head {
  display: flex;
  align-items: flex-end;
  justify-content: center;
  box-sizing: border-box;
  background: #f0f0f0;
  border-right: 1px solid #b5b5b5;
  border-bottom: 1px solid #d0d0d0;
  font-family: "Liberation Sans", sans-serif;
  font-size: 16px;
  line-height: 15px;
  color: #444;
}

.row-head.sel {
  background: #e1e1e1;
  border-bottom-color: #bdbdbd;
  color: #217346;
}

.cell {
  display: flex;
  align-items: center;
  justify-content: center;
  box-sizing: border-box;
  min-width: 0;
  white-space: nowrap;
  color: #111;
}

.cell.blank {
  border-right: 1px solid #e2e2e2;
  border-bottom: 2px solid #e2e2e2;
}

.cell.head {
  border-right: 1px solid #000;
  border-bottom: 1px solid #000;
  font-family: "Liberation Serif", "Noto Sans CJK SC", serif;
  font-weight: 700;
  font-size: 24px;
  padding-top: 2px;
}

.cell.active {
  background: #8eaadb;
}

.cell.dim {
  background: #6f83a8;
}

.cell.data {
  background: #c6c6c6;
  border-right: 1px solid #000;
  border-bottom: 1px solid #000;
  padding-top: 3px;
}

.cell.split {
  background: #c6c6c6;
  border-right: 1px solid #a9a9a9;
  border-bottom: 1px solid #a9a9a9;
  padding-top: 3px;
}

.cell.small {
  padding-top: 0;
  font-size: 18px;
  color: #333;
  font-family: "Noto Sans CJK SC", sans-serif;
}

.cell.num {
  font-family: "Liberation Serif", serif;
  font-size: 19px;
}

.cell.wide {
  letter-spacing: 1.4px;
}

.cell.wider {
  letter-spacing: 2.1px;
}

.cell.cjk {
  padding-top: 0;
  font-family: "Noto Sans CJK SC", sans-serif;
  font-weight: 300;
  font-size: 22px;
  color: #333;
}

.sel-box {
  position: absolute;
  left: 33px;
  top: 21px;
  box-sizing: border-box;
  width: 1110px;
  height: 618px;
  border: 2px solid #217346;
  box-shadow: inset 0 0 0 1px #fff;
  pointer-events: none;
}

.sel-box i {
  position: absolute;
  right: -5px;
  bottom: -5px;
  width: 7px;
  height: 7px;
  background: #217346;
  border: 1px solid #fff;
}

.vscroll {
  display: flex;
  flex-direction: column;
  align-items: center;
  box-sizing: border-box;
  width: 25px;
  height: 689px;
  padding: 4px 0 0 1px;
  background: #fafafa;
  border-radius: 0 0 9px 9px;
}

.vthumb {
  width: 15px;
  height: 458px;
  margin-top: 3px;
  border-radius: 7px;
  background: #6f6f6f;
}

.tri {
  display: block;
  flex: none;
  width: 0;
  height: 0;
  border: 5px solid transparent;
}

.tri.up {
  border-top: 0;
  border-left-width: 6px;
  border-right-width: 6px;
  border-bottom: 9px solid #6f6f6f;
}

.tri.down {
  margin-top: auto;
  margin-bottom: 3px;
  border-bottom: 0;
  border-left-width: 6px;
  border-right-width: 6px;
  border-top: 9px solid #6f6f6f;
}

.tri.left {
  border-left: 0;
  border-right: 7px solid #6f6f6f;
}

.tri.right {
  border-right: 0;
  border-left: 7px solid #6f6f6f;
}

/* 工作表标签 */
.sheet-tabs {
  display: flex;
  align-items: center;
  box-sizing: border-box;
  height: 41px;
  padding-left: 32px;
  flex: none;
  border-top: 1px solid #e6e6e6;
}

.nav-b {
  margin-left: 31px;
}

.sheet-tab {
  display: flex;
  align-items: flex-start;
  justify-content: center;
  box-sizing: border-box;
  width: 82px;
  height: 35px;
  margin: -5px 0 0 60px;
  background: #fff;
  border-radius: 0 0 6px 6px;
  box-shadow: 0 1px 2px rgba(0, 0, 0, 0.15);
  font-size: 18px;
  line-height: 30px;
  color: #333;
}

.sheet-tab span {
  display: block;
  height: 30px;
  padding: 0 1px;
  border-bottom: 3px solid #107c41;
}

.tab-sep {
  width: 1px;
  height: 26px;
  margin-left: 3px;
  background: #ccc;
}

.add-sheet {
  margin-left: 50px;
  font-family: "Liberation Sans", sans-serif;
  font-size: 28px;
  line-height: 30px;
  color: #444;
}

.h-dots {
  margin-left: 854px;
  width: 10px;
  text-align: center;
  font-weight: 700;
  font-size: 17px;
  color: #444;
}

.hscroll {
  display: flex;
  align-items: center;
  box-sizing: border-box;
  width: 725px;
  height: 21px;
  margin-left: 16px;
  padding: 0 7px 0 8px;
  background: #f8f8f8;
  border-radius: 10px;
}

.hthumb {
  width: 626px;
  height: 11px;
  margin-left: 9px;
  border-radius: 6px;
  background: #6f6f6f;
}

.hscroll .tri.right {
  margin-left: auto;
}

/* 状态栏 */
.status {
  display: flex;
  align-items: center;
  box-sizing: border-box;
  height: 27px;
  padding-left: 13px;
  flex: none;
  background: #f3f3f3;
  border-top: 1px solid #fff;
  font-size: 15px;
  color: #333;
  white-space: nowrap;
}

.st-macro {
  margin-left: 25px;
}

.st-access {
  margin-left: 21px;
}

.st-access-text {
  width: 128px;
  margin-left: 4px;
}

.st-stat {
  font-size: 15.5px;
}

.view-btn {
  display: flex;
  align-items: center;
  justify-content: center;
  width: 50px;
  height: 26px;
  flex: none;
}

.view-btn.on {
  margin-left: 22px;
  background: #e0e0e0;
}

.zoom-sign {
  width: 13px;
  text-align: center;
  font-size: 17px;
  margin-left: 5px;
}

.zoom-track {
  position: relative;
  width: 124px;
  height: 1px;
  margin-left: 5px;
  background: #555;
}

.zoom-track i {
  position: absolute;
  left: 60px;
  top: -7px;
  width: 6px;
  height: 15px;
  background: #5a5a5a;
}

.zoom-pct {
  margin-left: 15px;
  font-size: 15px;
}

.taskbar {
  position: relative;
  display: flex;
  height: 9px;
  flex: none;
  background: #e8e8e8;
  overflow: hidden;
}

.task-win {
  box-sizing: border-box;
  width: 358px;
  height: 9px;
  margin-left: 61px;
  background: #fff;
  border: 1px solid #bbb;
  border-bottom: 0;
}

.task-light {
  width: 61px;
  height: 9px;
  margin-left: 189px;
  background: #f2f2f2;
}

.clock {
  position: absolute;
  left: 1857px;
  top: 2px;
  font-size: 14px;
  line-height: 20px;
  color: #222;
}

/* 对话框 */
.dialog {
  position: absolute;
  left: 929px;
  top: 461px;
  display: flex;
  flex-direction: column;
  box-sizing: border-box;
  width: 734px;
  height: 335px;
  background: #f0f0f0;
  border: 1px solid #7a7a7a;
  box-shadow: 0 6px 18px rgba(0, 0, 0, 0.38);
  color: #222;
  font-size: 15px;
}

.dlg-title {
  display: flex;
  align-items: center;
  height: 36px;
  padding: 0 23px 3px 9px;
  box-sizing: border-box;
  flex: none;
  background: #fff;
}

.dlg-help {
  margin: 0 50px 0 auto;
  font-family: "Liberation Sans", sans-serif;
  font-size: 15px;
}

.dlg-body {
  flex: 1;
  padding: 11px 7px 0 8px;
}

.dlg-toolbar {
  display: flex;
  align-items: center;
  gap: 4px;
  height: 30px;
}

.btn {
  display: flex;
  align-items: center;
  justify-content: center;
  gap: 3px;
  box-sizing: border-box;
  height: 30px;
  padding: 0 0 2px;
  flex: none;
  background: #e1e1e1;
  border: 1px solid #adadad;
  font: inherit;
  color: #222;
  white-space: nowrap;
}

.dlg-sep {
  display: block;
  width: 2px;
  height: 32px;
  margin: 0 -1px 0 -1px;
  background: #222;
}

.arrow-btn {
  width: 30px;
}

.has-header {
  display: flex;
  align-items: center;
  gap: 9px;
  margin-left: 31px;
  padding-bottom: 2px;
  white-space: nowrap;
}

.has-header i {
  display: block;
  box-sizing: border-box;
  width: 15px;
  height: 15px;
  background: #fff;
  border: 1px solid #333;
}

.dlg-list {
  box-sizing: border-box;
  width: 717px;
  height: 202px;
  margin-top: 6px;
  background: #fff;
  border: 1px solid #828790;
}

.list-head {
  display: flex;
  height: 30px;
  line-height: 30px;
  border-bottom: 1px solid #e5e5e5;
}

.list-head span {
  box-sizing: border-box;
  padding-left: 5px;
  border-right: 1px solid #e5e5e5;
}

.list-row {
  display: flex;
  align-items: center;
  height: 30px;
  margin-left: 1px;
  width: 713px;
  background: #e2e2ea;
}

.row-name {
  width: 88px;
  flex: none;
  padding-left: 1px;
  margin-top: -8px;
  box-sizing: border-box;
}

.combo {
  display: flex;
  align-items: center;
  justify-content: space-between;
  box-sizing: border-box;
  height: 28px;
  padding: 0 1px 0 3px;
  flex: none;
  background: #fff;
  border: 1px solid #adadad;
}

.combo span {
  margin-top: -3px;
}

.combo b {
  display: flex;
  align-items: center;
  justify-content: center;
  box-sizing: border-box;
  width: 21px;
  height: 24px;
  background: #e1e1e1;
  border: 1px solid #adadad;
  font-weight: 400;
}

.dlg-foot {
  display: flex;
  justify-content: flex-end;
  gap: 13px;
  margin-top: 7px;
  padding-right: 1px;
}

.foot-btn {
  width: 86px;
}

.primary {
  border: 2px solid #0078d7;
}

.grip {
  position: absolute;
  right: 1px;
  bottom: 1px;
  display: grid;
  grid-template-columns: repeat(3, 3px);
  grid-template-rows: repeat(3, 3px);
  gap: 1px;
}

.grip i {
  background: #b8b8b8;
}

.grip i:nth-child(1) {
  grid-area: 1 / 3;
}

.grip i:nth-child(2) {
  grid-area: 2 / 2;
}

.grip i:nth-child(3) {
  grid-area: 2 / 3;
}

.grip i:nth-child(4) {
  grid-area: 3 / 1;
}

.grip i:nth-child(5) {
  grid-area: 3 / 2;
}

.grip i:nth-child(6) {
  grid-area: 3 / 3;
}

/* 红框和箭头 */
.mark {
  position: absolute;
  box-sizing: border-box;
  border: 3px solid #f33b3b;
}

.mark-f {
  left: 762px;
  top: 254px;
  width: 104px;
  height: 49px;
}

.mark-combo {
  left: 1011px;
  top: 565px;
  width: 169px;
  height: 51px;
}

.arrow {
  position: absolute;
  left: 0;
  top: 0;
  pointer-events: none;
}

/* 水印 */
.watermark {
  position: absolute;
  left: 0;
  top: 0;
  width: 1920px;
  height: 1039px;
  pointer-events: none;
  color: rgba(255, 255, 255, 0.85);
  -webkit-text-stroke: 1.3px #d4d4d4;
}

.watermark span,
.wm-paw {
  position: absolute;
}

.wm-bai {
  left: 1472px;
  top: 882px;
  font-family: "Liberation Sans", sans-serif;
  font-weight: 700;
  font-size: 84px;
  line-height: 62px;
  letter-spacing: -5px;
}

.wm-paw {
  left: 1587px;
  top: 830px;
}

.wm-du {
  left: 1615px;
  top: 892px;
  font-family: "Liberation Sans", sans-serif;
  font-size: 46px;
  line-height: 50px;
}

.wm-jy {
  left: 1697px;
  top: 884px;
  font-family: "Noto Sans CJK SC", sans-serif;
  font-weight: 700;
  font-size: 58px;
  line-height: 60px;
}

.wm-url {
  left: 1476px;
  top: 949px;
  font-family: "Liberation Sans", sans-serif;
  font-size: 43px;
  line-height: 40px;
  white-space: nowrap;
}
</style>
